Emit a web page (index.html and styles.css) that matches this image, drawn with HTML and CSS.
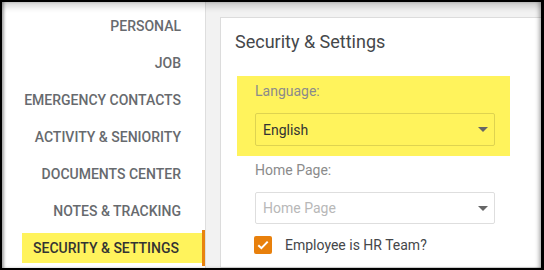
FILE: index.html
```html
<!DOCTYPE html>
<html lang="en">
<head>
  <meta charset="UTF-8">
  <meta name="viewport" content="width=device-width, initial-scale=1.0">
  <title>Security &amp; Settings</title>
  <link rel="stylesheet" href="styles.css">
</head>
<body>
  <div class="frame">
    <nav class="sidebar">
      <a class="nav-item">Personal</a>
      <a class="nav-item">Job</a>
      <a class="nav-item">Emergency Contacts</a>
      <a class="nav-item">Activity &amp; Seniority</a>
      <a class="nav-item">Documents Center</a>
      <a class="nav-item">Notes &amp; Tracking</a>
      <a class="nav-item active">Security &amp; Settings</a>
    </nav>
    <main class="content">
      <section class="card">
        <h2 class="card-title">Security &amp; Settings</h2>
        <div class="field highlight">
          <label class="field-label">Language:</label>
          <div class="select">
            <span class="select-value">English</span>
            <span class="caret"></span>
          </div>
        </div>
        <div class="field">
          <label class="field-label">Home Page:</label>
          <div class="select">
            <span class="select-value placeholder">Home Page</span>
            <span class="caret"></span>
          </div>
          <div class="check-row">
            <span class="checkbox">
              <svg width="12" height="10" viewBox="0 0 12 10"><path d="M1.3 5.2 L4.4 8.2 L10.7 1.6" fill="none" stroke="#fff" stroke-width="2"/></svg>
            </span>
            <span class="check-label">Employee is HR Team?</span>
          </div>
        </div>
      </section>
    </main>
  </div>
</body>
</html>
```
FILE: styles.css
```css
html, body {
  margin: 0;
  padding: 0;
  height: 100%;
  background: #000;
  overflow: hidden;
}
body {
  padding: 2px 3px 2px 2px;
  box-sizing: border-box;
  font-family: Roboto, 'Liberation Sans', sans-serif;
}
.frame {
  position: relative;
  display: flex;
  height: 100%;
  background: #f2f2f2;
  overflow: hidden;
}
.frame::after {
  content: '';
  position: absolute;
  top: 0;
  left: 0;
  right: 0;
  bottom: 0;
  pointer-events: none;
  box-shadow: inset 0 8px 6px -3px rgba(0, 0, 0, 0.16),
              inset 3px 0 3px -1px rgba(0, 0, 0, 0.35),
              inset -4px 0 4px -2px rgba(0, 0, 0, 0.3);
}
.sidebar {
  width: 203px;
  flex-shrink: 0;
  background: #fff;
  border-right: 1px solid #dedede;
  display: flex;
  flex-direction: column;
  gap: 7px;
  padding-top: 9px;
}
.nav-item {
  position: relative;
  display: block;
  margin-left: 20px;
  height: 30px;
  line-height: 30px;
  padding-right: 24px;
  text-align: right;
  text-transform: uppercase;
  font-size: 14px;
  font-weight: 500;
  color: #676a6e;
  white-space: nowrap;
}
.nav-item.active {
  margin-right: 3px;
  padding: 0 0 0 11px;
  text-align: left;
  background: #fff35c;
  color: #333;
}
.nav-item.active::after {
  content: '';
  position: absolute;
  top: -3px;
  bottom: -3px;
  right: -3px;
  width: 3px;
  background: #e8830e;
}
.content {
  flex: 1;
  padding: 15px 0 0 14px;
}
.card {
  background: #fff;
  border: 1px solid #dcdcdc;
  border-right: none;
  height: 100%;
  box-sizing: border-box;
  padding: 12px 14px;
}
.card-title {
  margin: 0;
  font-size: 18px;
  font-weight: 400;
  line-height: 24px;
  color: #45474a;
}
.field {
  width: 273px;
  box-sizing: border-box;
  margin-left: 2px;
  padding: 6px 15px 0 18px;
}
.field.highlight {
  margin-top: 22px;
  padding: 7px 15px 10px 18px;
  background: #fff35c;
}
.field-label {
  display: block;
  font-size: 14px;
  line-height: 17px;
  color: #8b8b8b;
  margin-bottom: 13px;
}
.select {
  display: flex;
  align-items: center;
  justify-content: space-between;
  height: 30px;
  border: 1px solid rgba(0, 0, 0, 0.13);
  border-radius: 2px;
  padding: 0 6px 0 7px;
}
.highlight .select {
  height: 31px;
}
.select-value {
  font-size: 14px;
  color: #333;
}
.select-value.placeholder {
  color: #b8b8b8;
}
.caret {
  width: 0;
  height: 0;
  border-left: 5px solid transparent;
  border-right: 5px solid transparent;
  border-top: 5px solid #666;
}
.check-row {
  display: flex;
  align-items: center;
  gap: 13px;
  margin-top: 12px;
  margin-left: -1px;
  height: 18px;
}
.checkbox {
  width: 18px;
  height: 18px;
  border-radius: 2px;
  background: #e8800c;
  display: flex;
  align-items: center;
  justify-content: center;
}
.check-label {
  font-size: 14px;
  color: #45474a;
}
```
